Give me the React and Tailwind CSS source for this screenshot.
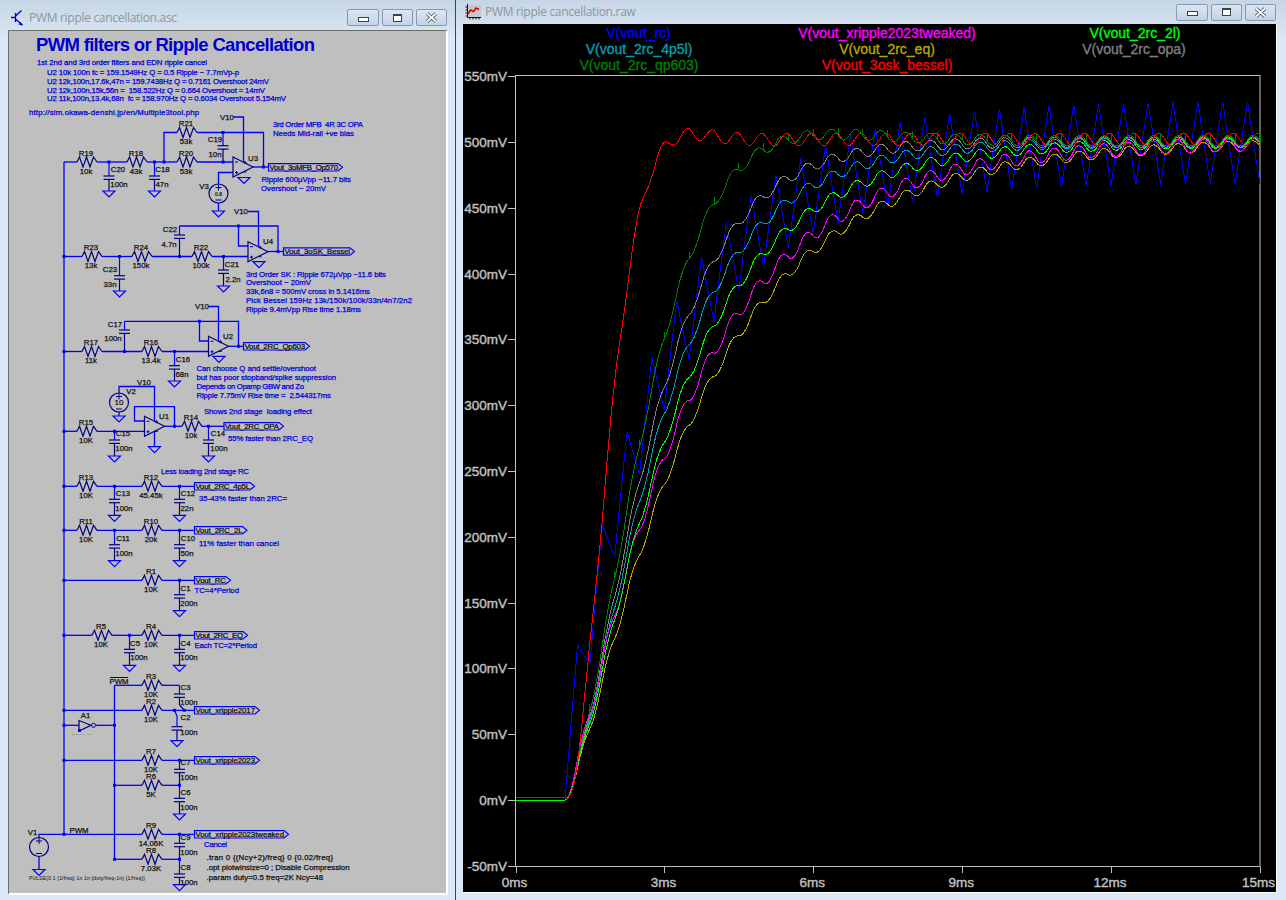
const BLUE = '#0000ff';
const BODY = '#000080';
const NOTE = '#0000d8';

// [x, top of wire, first plate y, bottom of wire, has ground]
const caps = [
  [109, 162, 176, 191, 1], [154.5, 162, 176, 191, 1], [223, 132.5, 145.7, 162, 0], [179.5, 226, 235, 256.5, 0],
  [119.5, 256.5, 275.7, 291, 1], [223.5, 256.5, 270, 286, 1], [124.5, 321.3, 330, 351.5, 0], [174.5, 351.5, 365.7, 381, 1],
  [114.5, 431.3, 440, 456, 1], [208.5, 426.3, 440, 456, 1], [114.5, 486.3, 499.3, 515.3, 1], [179.5, 486.3, 499.3, 515.3, 1],
  [114.5, 530.3, 544.7, 560.7, 1], [179.5, 530.3, 544.7, 560.7, 1], [179.5, 580.3, 594.7, 610.7, 1],
  [129.5, 635.3, 649.3, 665.3, 1], [179.5, 635.3, 649.3, 665.3, 1], [179.5, 685.3, 694, 705, 0], [177, 716, 726.7, 740.7, 1],
  [179.5, 760.3, 769.3, 785.3, 0], [179.5, 785.3, 798.3, 814, 1], [179.5, 834.3, 843.3, 859.3, 0], [179.5, 859.3, 874, 884.7, 1],
];

const resistors = [
  [77, 162], [127, 162], [177, 162], [177, 132.5], [82, 256.5], [132, 256.5], [192, 256.5], [82, 351.5], [142, 351.5],
  [77, 431.3], [182, 426.3], [77, 486.3], [142, 486.3], [77, 530.3], [142, 530.3], [142, 580.3], [92, 635.3], [142, 635.3],
  [142, 685.3], [142, 710.3], [142, 760.3], [142, 785.3], [142, 834.3], [142, 859.3],
];

const wires = [
  '64,162 64,834.3', '64,162 77,162', '97,162 127,162', '147,162 177,162', '197,162 233,162',
  '164,162 164,132.5 177,132.5', '197,132.5 263.5,132.5 263.5,167', '253,167 268.5,167',
  '233,117 243.5,117 243.5,162', '233,172.5 218.5,172.5 218.5,184', '218.5,203 218.5,211',
  '248,211.5 258.5,211.5 258.5,246', '179.5,226 278,226 278,251.5', '238.5,226 238.5,246 248,246', '268,251.5 283.5,251.5',
  '64,256.5 82,256.5', '102,256.5 132,256.5', '152,256.5 192,256.5', '212,256.5 248,256.5',
  '208,306.5 218.5,306.5 218.5,341', '124.5,321.3 238.5,321.3 238.5,346.3', '199.5,321.3 199.5,341 208.5,341', '228.5,346.3 243.5,346.3',
  '64,351.5 82,351.5', '102,351.5 142,351.5', '162,351.5 208.5,351.5',
  '119,393 119,386.5 154.5,386.5 154.5,421', '119,412 119,416', '144.5,421 134.5,421 134.5,406.7 174.5,406.7 174.5,426.3',
  '164.5,426.3 182,426.3', '202,426.3 224,426.3', '64,431.3 77,431.3', '97,431.3 144.5,431.3', '154.5,431 154.5,446.7',
  '64,486.3 77,486.3', '97,486.3 142,486.3', '162,486.3 194.5,486.3',
  '64,530.3 77,530.3', '97,530.3 142,530.3', '162,530.3 194.5,530.3',
  '64,580.3 142,580.3', '162,580.3 194.5,580.3',
  '64,635.3 92,635.3', '112,635.3 142,635.3', '162,635.3 194.5,635.3',
  '114.5,685.3 142,685.3', '162,685.3 179.5,685.3', '179.5,705 184.3,710.3', '174.5,710.3 177,716',
  '114.5,685.3 114.5,859.3', '64,710.3 142,710.3', '162,710.3 194.5,710.3',
  '64,725.3 79,725.3', '96,725.3 114.5,725.3',
  '64,760.3 142,760.3', '162,760.3 194.5,760.3', '114.5,785.3 142,785.3', '162,785.3 179.5,785.3',
  '39,837.5 39,834.3 142,834.3', '162,834.3 194.5,834.3', '114.5,859.3 142,859.3', '162,859.3 179.5,859.3', '39,856.5 39,869.5',
];

const junctions = [
  [109, 162], [154.5, 162], [164, 162], [223, 162], [223, 132.5], [263.5, 167], [238.5, 226], [278, 251.5],
  [64, 256.5], [119.5, 256.5], [179.5, 256.5], [223.5, 256.5], [199.5, 321.3], [238.5, 346.3], [64, 351.5], [124.5, 351.5], [174.5, 351.5],
  [174.5, 426.3], [208.5, 426.3], [64, 431.3], [114.5, 431.3], [64, 486.3], [114.5, 486.3], [179.5, 486.3],
  [64, 530.3], [114.5, 530.3], [179.5, 530.3], [64, 580.3], [179.5, 580.3], [64, 635.3], [129.5, 635.3], [179.5, 635.3],
  [64, 710.3], [174.5, 710.3], [184.3, 710.3], [64, 725.3], [114.5, 725.3], [64, 760.3], [179.5, 760.3], [114.5, 785.3], [179.5, 785.3],
  [64, 834.3], [179.5, 834.3], [114.5, 859.3], [179.5, 859.3],
];

const extraGrounds = [[218.5, 211], [244, 177.5], [259, 261.7], [219, 356.3], [119, 416], [154.5, 446.7], [39, 869.5]];
const opamps = [[233, 167, 'U3'], [248, 251.7, 'U4'], [208.5, 346.3, 'U2'], [144.5, 426.3, 'U1']];
const sources = [[218.5, 193.5, '0.8', 5], [119, 402.5, '10', 8], [39, 847, '', 8]];

const flags = [
  [268.5, 167.3, 338, 'Vout_3oMFB_Op570'], [283.5, 251.5, 350, 'Vout_3oSK_Bessel'], [243.5, 346.3, 305, 'Vout_2RC_Qp603'],
  [224, 426.3, 279, 'Vout_2RC_OPA'], [194.5, 486.3, 250, 'Vout_2RC_4p5L'], [194.5, 530.3, 242.5, 'Vout_2RC_2L'],
  [194.5, 580.3, 226, 'Vout_RC'], [194.5, 635.3, 243, 'Vout_2RC_EQ'], [194.5, 710.3, 255, 'Vout_xripple2017'],
  [194.5, 760.3, 255, 'Vout_xripple2023'], [194.5, 834.3, 284, 'Vout_xripple2023tweaked'],
];

// component names and values, centre anchored
const labels = [
  ['R19', 86, 153], ['10k', 86, 171], ['R18', 136, 153], ['43k', 136, 171], ['R20', 186, 153], ['53k', 186, 171], ['R21', 186, 123], ['53k', 186, 141],
  ['C20', 118, 169.5], ['100n', 119, 184.5], ['C18', 162.5, 169.5], ['47n', 162, 184.5], ['C19', 215, 139.5], ['10n', 215, 154.5],
  ['V10', 227, 117], ['U3', 253, 158], ['V3', 204, 186], ['V10', 241, 211.5], ['C22', 170, 229.5], ['4.7n', 169, 244.5],
  ['R23', 91, 247.5], ['13k', 91, 265.5], ['R24', 141, 247.5], ['150k', 141, 265.5], ['R22', 201, 247.5], ['100k', 201, 265.5], ['U4', 268, 241.5],
  ['C23', 110, 269.5], ['33n', 110, 284.5], ['C21', 232, 264.5], ['2.2n', 233, 279.5], ['V10', 202, 306.5], ['C17', 115, 324.5], ['100n', 113, 338.5],
  ['R17', 91, 342.5], ['11k', 91, 360.5], ['R16', 151, 342.5], ['13.4k', 151, 360.5], ['U2', 228, 336.5], ['C16', 183, 359], ['68n', 182, 374],
  ['V10', 144, 382], ['V2', 131, 391], ['U1', 164, 416.5], ['R14', 191, 417], ['10k', 191, 435.5], ['R15', 86, 422.5], ['10K', 86, 440.5],
  ['C15', 123, 433.5], ['100n', 124, 448], ['C14', 218, 433], ['100n', 219, 448],
  ['R13', 86, 477.5], ['10K', 86, 495.5], ['R12', 151, 477.5], ['45.45k', 151, 495.5], ['C13', 123, 493.5], ['100n', 124, 508], ['C12', 188, 493.5], ['22n', 187, 508],
  ['R11', 86, 521.5], ['10K', 86, 539.5], ['R10', 151, 521.5], ['20k', 151, 539.5], ['C11', 123, 538.5], ['100n', 124, 553.5], ['C10', 188, 538.5], ['50n', 187, 553.5],
  ['R1', 151, 571.5], ['10K', 151, 589.5], ['C1', 185.5, 588], ['200n', 189, 603.5],
  ['R5', 101, 626.5], ['10K', 101, 644.5], ['R4', 151, 626.5], ['10K', 151, 644.5], ['C5', 135, 643.5], ['100n', 139, 657.5], ['C4', 185.5, 643.5], ['100n', 189, 657.5],
  ['PWM', 119, 681.5], ['R3', 151, 676.5], ['10K', 151, 694.5], ['C3', 185.5, 687.5], ['100n', 189, 702.5], ['R2', 151, 701.5], ['10K', 151, 719.5],
  ['A1', 85.5, 715.5], ['C2', 185.5, 717.5], ['100n', 189, 732.5], ['R7', 151, 751.5], ['10K', 151, 769.5], ['C7', 185.5, 762.5], ['100n', 189, 777.5],
  ['R6', 151, 776.5], ['5K', 151, 794.5], ['C6', 185.5, 792.5], ['100n', 189, 807.5], ['V1', 32.5, 832], ['PWM', 79, 830.5],
  ['R9', 151, 825.5], ['14.06K', 151, 843.5], ['C9', 185.5, 837.5], ['100n', 189, 852.5], ['R8', 151, 850.5], ['7.03K', 151, 868.5], ['C8', 185.5, 867.5], ['100n', 189, 882.5],
];

// free text: [text, x, centre y, right edge, colour]
const notes = [
  ['1st 2nd and 3rd order filters and EDN ripple cancel', 37, 62.5, 207],
  ['U2 10k 100n fc = 159.1549Hz Q = 0.5 Ripple ~ 7.7mVp-p', 47, 72.5, 239],
  ['U2 12k,100n,17.6k,47n = 159.7438Hz Q = 0.7161 Overshoot 24mV', 47, 81.5, 269],
  ['U2 12k,100n,15k,56n =  158.522Hz Q = 0.664 Overshoot = 14mV', 47, 90, 265],
  ['U2 11k,100n,13.4k,68n  fc = 158.970Hz Q = 0.6034 Overshoot 5.154mV', 47, 98.5, 286],
  ['http://sim.okawa-denshi.jp/en/Multiple3tool.php', 29, 112.5, 199],
  ['3rd Order MFB  4R 3C OPA', 273, 124.5, 363],
  ['Needs Mid-rail +ve bias', 273, 133.5, 354],
  ['Ripple 600µVpp ~11.7 bits', 261.5, 179.5, 351],
  ['Overshoot ~ 20mV', 261, 188.5, 326],
  ['3rd Order SK : Ripple 672µVpp ~11.6 bits', 246, 274.5, 386],
  ['Overshoot ~ 20mV', 246, 282.5, 311],
  ['33k,6n8 = 500mV cross in 5.1416ms', 246, 291.5, 370],
  ['Pick Bessel 159Hz 13k/150k/100k/33n/4n7/2n2', 246, 300.5, 412],
  ['Ripple 9.4mVpp Rise time 1.18ms', 246, 309.5, 361],
  ['Can choose Q and settle/overshoot', 196.5, 368.5, 316],
  ['but has poor stopband/spike suppression', 196.5, 377.5, 336],
  ['Depends on Opamp GBW and Zo', 196.5, 386.5, 304],
  ['Ripple 7.75mV Rise time =  2.544317ms', 196.5, 395.5, 331],
  ['Shows 2nd stage  loading effect', 204, 411.5, 312],
  ['55% faster than 2RC_EQ', 228, 438.5, 313],
  ['Less loading 2nd stage RC', 161, 471.5, 249],
  ['35-43% faster than 2RC=', 199, 498.5, 287],
  ['11% faster than cancel', 199, 543.5, 279],
  ['TC=4*Period', 194.5, 590.5, 239],
  ['Each TC=2*Period', 194.5, 645.5, 257],
  ['Cancel', 204, 844.5, 227],
  ['.tran 0 {(Ncy+2)/freq} 0 {0.02/freq}', 206.5, 857.5, 333, '#101010'],
  ['.opt plotwinsize=0 ; Disable Compression', 206.5, 867.5, 349.5, '#101010'],
  ['.param duty=0.5 freq=2K Ncy=48', 206.5, 877.5, 323, '#101010'],
];

function Note({ text, x, y, right, fill = NOTE }) {
  return (
    <text x={x} y={y + 2.8} fontSize="7.8" fill={fill} stroke={fill} strokeWidth="0.25" textLength={right - x} lengthAdjust="spacing" className="whitespace-pre">
      {text}
    </text>
  );
}

function Ground({ x, y }) {
  return <polygon points={`${x - 6},${y} ${x + 6},${y} ${x},${y + 6}`} fill="none" stroke={BLUE} strokeWidth="1.2" />;
}

function Schematic() {
  return (
    <svg width="438" height="862" viewBox="9 31 438 862" className="block">
      <text x="36" y="51" fontSize="18.5" fontWeight="700" fill="#0000d0" textLength="279" lengthAdjust="spacing">PWM filters or Ripple Cancellation</text>
      {wires.map((w, i) => <polyline key={i} points={w} fill="none" stroke={BLUE} strokeWidth="1.3" />)}
      {resistors.map(([x, y], i) => (
        <polyline key={i} fill="none" stroke={BODY} strokeWidth="1.2" points={`${x},${y} ${x + 2.5},${y - 5} ${x + 6},${y + 5} ${x + 9.5},${y - 5} ${x + 13},${y + 5} ${x + 16.5},${y - 5} ${x + 20},${y}`} />
      ))}
      {caps.map(([x, top, plate, bottom, gnd], i) => (
        <g key={i} strokeWidth="1.2">
          <line x1={x} y1={top} x2={x} y2={plate} stroke={BLUE} />
          <line x1={x} y1={plate + 3.4} x2={x} y2={bottom} stroke={BODY} />
          <line x1={x - 5.5} y1={plate} x2={x + 5.5} y2={plate} stroke={BODY} />
          <line x1={x - 5.5} y1={plate + 3.4} x2={x + 5.5} y2={plate + 3.4} stroke={BODY} />
          {gnd ? <Ground x={x} y={bottom} /> : null}
        </g>
      ))}
      {extraGrounds.map(([x, y], i) => <Ground key={i} x={x} y={y} />)}
      {opamps.map(([x, y, name]) => (
        <g key={name} stroke={BODY} fill="none" strokeWidth="1.2">
          <polygon points={`${x},${y - 10} ${x + 20},${y} ${x},${y + 10}`} />
          <path d={`M${x + 2} ${y - 5}h3 M${x + 2} ${y + 5.5}h3 M${x + 3.5} ${y + 4}v3 M${x + 12} ${y - 6}v3 M${x + 10.5} ${y - 4.5}h3 M${x + 10.5} ${y + 5}h3`} strokeWidth="1" />
        </g>
      ))}
      {sources.map(([x, y, value, size], i) => (
        <g key={i}>
          <circle cx={x} cy={y} r="9.5" fill="none" stroke={BODY} strokeWidth="1.2" />
          <path d={`M${x - 3} ${y - 6}h6 M${x} ${y - 9}v6 M${x - 3} ${y + 6.5}h6`} stroke={BODY} fill="none" />
          {value && <text x={x} y={y + 2.5} fontSize={size} fill="#000" stroke="#000" strokeWidth="0.15" textAnchor="middle">{value}</text>}
        </g>
      ))}
      <polygon points="79,720.5 91,725.3 79,731" fill="none" stroke={BODY} strokeWidth="1.2" />
      <circle cx="93.5" cy="725.3" r="2" fill="none" stroke={BODY} />
      <rect x="78.5" y="729.5" width="2" height="2" fill="none" stroke={BLUE} />
      <text x="72" y="735" fontSize="2.5" fill="#555" textLength="20">DIGITAL INV</text>
      <line x1="110" y1="677.5" x2="128" y2="677.5" stroke="#111" />
      {junctions.map(([x, y], i) => <rect key={i} x={x - 1.5} y={y - 1.5} width="3" height="3" fill={BLUE} />)}
      {flags.map(([x, y, right, name]) => (
        <g key={name}>
          <polygon points={`${x},${y - 3.7} ${right},${y - 3.7} ${right + 4.5},${y} ${right},${y + 3.7} ${x},${y + 3.7}`} fill="none" stroke={BLUE} strokeWidth="1.2" />
          <text x={x + 1} y={y + 2.8} fontSize="7.8" fill="#000" stroke="#000" strokeWidth="0.2" textLength={right - x - 1} lengthAdjust="spacing">{name}</text>
        </g>
      ))}
      {labels.map(([text, x, y], i) => (
        <text key={i} x={x} y={y + 2.8} fontSize="7.8" fill="#111" stroke="#111" strokeWidth="0.25" textAnchor="middle">{text}</text>
      ))}
      {notes.map(([text, x, y, right, fill], i) => <Note key={i} text={text} x={x} y={y} right={right} fill={fill} />)}
      <text x="29" y="880" fontSize="5" fill="#303030" stroke="#303030" strokeWidth="0.1" textLength="116" lengthAdjust="spacing">{'PULSE(0 1 {1/freq} 1n 1n {duty/freq-1n} {1/freq})'}</text>
    </svg>
  );
}

const STEP = 0.001;
const px = (t) => 515.5 + t * 49.63;
const py = (mv) => 800 - mv * 1.316;
const pwm = (t) => (t >= 1 && (t - 1) % 0.5 < 0.25 ? 1 : 0);

function simulate(init, deriv, out, every = 25) {
  const s = [...init];
  const pts = [];
  const n = Math.round(15 / STEP);
  for (let i = 0; i <= n; i++) {
    const t = i * STEP;
    if (i % every === 0) pts.push([t, out(s)]);
    const d = deriv(s, pwm(t));
    for (let k = 0; k < s.length; k++) s[k] += d[k] * STEP;
  }
  return pts;
}

const rcrc = (r1, c1, r2, c2) =>
  simulate([0, 0], ([a, b], u) => [((u - a) / r1 + (b - a) / r2) / (c1 * 1e-3), ((a - b) / r2) / (c2 * 1e-3)], (s) => s[1]);

const sallen2 = simulate(
  [0, 0],
  ([a, o], u) => {
    const dO = ((a - o) / 13.4) / (68 * 1e-3);
    return [((u - a) / 11 + (o - a) / 13.4) / (100 * 1e-3) + dO, dO];
  },
  (s) => s[1] * 1.002,
);

const sallen3 = simulate(
  [0, 0, 0],
  ([a, b, o], u) => {
    const dO = ((b - o) / 100) / (2.2 * 1e-3);
    return [
      ((u - a) / 13 + (b - a) / 150) / (33 * 1e-3),
      ((a - b) / 150 + (o - b) / 100) / (4.7 * 1e-3) + dO,
      dO,
    ];
  },
  (s) => s[2] + 0.002,
);

const buffered = simulate(
  [0, 0],
  ([a, b], u) => [((u - a) / 10) / 0.1, ((a - b) / 10) / 0.1],
  (s) => s[1],
);

const single = simulate([0], ([a], u) => [((u - a) / 10) / 0.2], (s) => s[0]);

const toPoints = (pts) => pts.map(([t, v]) => `${px(t).toFixed(1)},${py(v * 1000).toFixed(1)}`).join(' ');

function withSpikes(pts) {
  const res = [];
  pts.forEach(([t, v]) => {
    res.push(`${px(t).toFixed(1)},${py(v * 1000).toFixed(1)}`);
    if (t > 1 && Math.abs((t - 1) % 0.5) < 0.001) {
      res.push(`${px(t).toFixed(1)},${(py(v * 1000) - 7).toFixed(1)}`);
      res.push(`${px(t).toFixed(1)},${py(v * 1000).toFixed(1)}`);
    }
  });
  return res.join(' ');
}

const traces = [
  ['#0000ff', toPoints(single)],
  ['#00a0b0', toPoints(rcrc(10, 100, 45.45, 22))],
  ['#007f00', withSpikes(sallen2)],
  ['#808080', toPoints(buffered)],
  ['#b4a800', toPoints(rcrc(10, 100, 10, 100))],
  ['#ff00ff', toPoints(rcrc(10, 100, 7.5, 100))],
  ['#00ff00', toPoints(rcrc(10, 100, 20, 50))],
  ['#ff0000', toPoints(sallen3)],
];

const legend = [
  ['V(vout_rc)', 638.5, 38, '#0000ff'], ['V(vout_2rc_4p5l)', 639, 54, '#00a0b0'], ['V(vout_2rc_qp603)', 639, 70, '#007f00'],
  ['V(vout_xripple2023tweaked)', 887, 38, '#ff00ff'], ['V(vout_2rc_eq)', 887, 54, '#b4a800'], ['V(vout_3osk_bessel)', 887, 70, '#ff0000'],
  ['V(vout_2rc_2l)', 1135, 38, '#00ff00'], ['V(vout_2rc_opa)', 1134, 54, '#808080'],
];

const yTicks = [];
for (let mv = -50; mv <= 550; mv += 50) yTicks.push(mv);
const xTicks = [0, 3, 6, 9, 12, 15];

function Plot() {
  return (
    <svg width="813" height="868" viewBox="463 24 813 868" className="block">
      {legend.map(([text, x, y, fill]) => (
        <text key={text} x={x} y={y} fontSize="14" fill={fill} stroke={fill} strokeWidth="0.35" textAnchor="middle">{text}</text>
      ))}
      <rect x="515.5" y="75.5" width="744.5" height="791" fill="none" stroke="#c0c0c0" />
      {yTicks.map((mv) => (
        <g key={mv}>
          <line x1="508" y1={Math.round(py(mv)) + 0.5} x2="515" y2={Math.round(py(mv)) + 0.5} stroke="#c0c0c0" />
          <text x="507" y={py(mv) + 5} fontSize="13.5" fill="#c0c0c0" stroke="#c0c0c0" strokeWidth="0.4" textAnchor="end">{mv}mV</text>
        </g>
      ))}
      {xTicks.map((ms) => (
        <g key={ms}>
          <line x1={Math.round(px(ms)) + 0.5} y1="867" x2={Math.round(px(ms)) + 0.5} y2="873" stroke="#c0c0c0" />
          <text x={px(ms) - 1} y="886.5" fontSize="13.5" fill="#c0c0c0" stroke="#c0c0c0" strokeWidth="0.4" textAnchor={ms === 15 ? 'end' : 'middle'} dx={ms === 15 ? 16 : 0}>{ms}ms</text>
        </g>
      ))}
      {traces.map(([color, pts]) => (
        <polyline key={color} points={pts} fill="none" stroke={color} strokeWidth="1" shapeRendering="crispEdges" />
      ))}
    </svg>
  );
}

function WinButton({ width, children }) {
  return (
    <div style={{ width }} className="h-[17px] rounded-[2px] border border-[#8898b0] bg-linear-to-b from-[#dbe6f2] to-[#c3d3e6] flex items-center justify-center">
      {children}
    </div>
  );
}

function WindowButtons() {
  return (
    <div className="flex gap-[3px]">
      <WinButton width={32}>
        <div className="w-[11px] h-[5px] mt-[3px] bg-white border border-[#39414d]" />
      </WinButton>
      <WinButton width={31}>
        <div className="w-[9px] h-[8px] border border-t-2 border-[#39414d] bg-white" />
      </WinButton>
      <WinButton width={31}>
        <svg width="13" height="11" viewBox="0 0 13 11">
          <path d="M2 1.5 L11 9.5 M11 1.5 L2 9.5" stroke="#3a424e" strokeWidth="3.4" />
          <path d="M2 1.5 L11 9.5 M11 1.5 L2 9.5" stroke="#fff" strokeWidth="1.8" />
        </svg>
      </WinButton>
    </div>
  );
}

function TransistorIcon() {
  return (
    <svg width="12" height="16" viewBox="0 0 12 16" className="shrink-0">
      <path d="M0 7.5h4 M4.5 3v9 M4.5 6L10.5 0.5 M4.5 9l7 6" stroke="#0000c8" strokeWidth="1.3" fill="none" />
      <path d="M11.5 15.5l-4-1 2-2.5z" fill="#0000c8" />
    </svg>
  );
}

function WaveIcon() {
  return (
    <svg width="16" height="16" viewBox="0 0 16 16" className="shrink-0">
      <rect x="2" y="1" width="14" height="12" fill="#c8c8c8" />
      <path d="M2.5 0v13.5H16 M0.5 3h2 M0.5 6h2 M0.5 9h2 M0.5 12h2 M5 13.5v2 M8 13.5v2 M11 13.5v2 M14 13.5v2" stroke="#111" fill="none" />
      <path d="M3 10l2.5-4 3 1.5L11 4l3 1.5" stroke="#e00000" strokeWidth="1.6" fill="none" />
    </svg>
  );
}

export default function App() {
  return (
    <div className="w-[1286px] h-[900px] overflow-hidden flex bg-[#dbe8f5] font-['Liberation_Sans',Arial,sans-serif]">
      <section className="w-[455px] flex flex-col bg-linear-to-b from-[#c6d5e5] to-[#dbe8f5] to-[40px]">
        <div className="h-[30px] flex items-center pt-[5px] pl-[11px] pr-[8px]">
          <TransistorIcon />
          <span className="ml-[6px] flex-1 text-[12px] tracking-[-0.3px] text-[#8d969f] font-['Open_Sans',sans-serif]">PWM ripple cancellation.asc</span>
          <WindowButtons />
        </div>
        <div className="ml-[8px] w-[440px] h-[865px] bg-[#bfbfbf] border-t border-l border-[#6d6d6d] border-r-2 border-r-white border-b-2 border-b-white overflow-hidden">
          <Schematic />
        </div>
      </section>
      <div className="w-px h-full bg-[#3c4450]" />
      <section className="flex-1 flex flex-col bg-linear-to-b from-[#c6d5e5] to-[#dbe8f5] to-[40px]">
        <div className="h-[24px] flex items-center pl-[9px] pr-[10px]">
          <WaveIcon />
          <span className="ml-[4px] flex-1 text-[12px] tracking-[-0.3px] text-[#8d969f] font-['Open_Sans',sans-serif]">PWM ripple cancellation.raw</span>
          <WindowButtons />
        </div>
        <div className="ml-[7px] w-[814px] h-[869px] bg-black border-r border-b border-r-white border-b-white overflow-hidden">
          <Plot />
        </div>
      </section>
    </div>
  );
}
